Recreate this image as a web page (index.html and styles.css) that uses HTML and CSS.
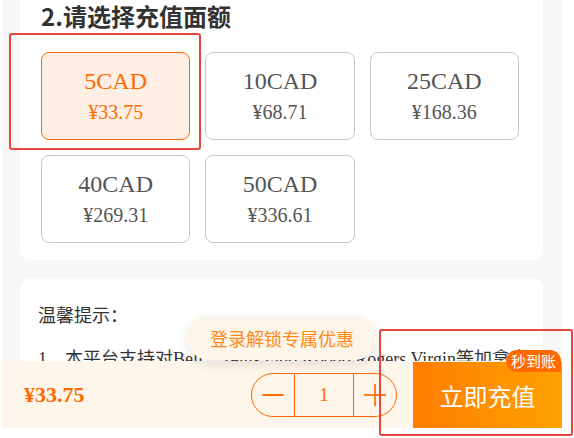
FILE: index.html
```html
<!DOCTYPE html>
<html lang="zh-CN">
<head>
<meta charset="utf-8">
<title>充值</title>
<link rel="stylesheet" href="styles.css">
</head>
<body>
<div class="page">
  <section class="card card-amount">
    <h2 class="title">2.请选择充值面额</h2>
    <div class="options">
      <div class="opt selected"><span class="amt">5CAD</span><span class="price">¥33.75</span></div>
      <div class="opt"><span class="amt">10CAD</span><span class="price">¥68.71</span></div>
      <div class="opt"><span class="amt">25CAD</span><span class="price">¥168.36</span></div>
      <div class="opt"><span class="amt">40CAD</span><span class="price">¥269.31</span></div>
      <div class="opt"><span class="amt">50CAD</span><span class="price">¥336.61</span></div>
    </div>
  </section>
  <section class="card card-tips">
    <h3 class="tips-title">温馨提示：</h3>
    <p class="tips-line">1、本平台支持对Bell、Telus Fido Koodo Rogers Virgin等加拿大运营商进行充值</p>
  </section>
  <div class="login-tip">登录解锁专属优惠</div>
  <div class="bar">
    <span class="total">¥33.75</span>
    <div class="stepper">
      <span class="step"><svg width="22" height="22" viewBox="0 0 22 22"><line x1="0.5" y1="11" x2="21.5" y2="11" stroke="#ff6a00" stroke-width="2"/></svg></span>
      <span class="qty">1</span>
      <span class="step"><svg width="22" height="22" viewBox="0 0 22 22"><line x1="0" y1="11" x2="22" y2="11" stroke="#ff6a00" stroke-width="1.7"/><line x1="11" y1="0" x2="11" y2="22" stroke="#ff6a00" stroke-width="1.7"/></svg></span>
    </div>
    <div class="pay">立即充值<span class="badge">秒到账</span></div>
  </div>
</div>
<div class="mark mark-a"></div>
<div class="mark mark-b"></div>
</body>
</html>
```
FILE: styles.css
```css
html, body {
  margin: 0;
  padding: 0;
  background: #ffffff;
}
body {
  position: relative;
  width: 574px;
  height: 438px;
  overflow: hidden;
}
.page {
  position: relative;
  width: 560px;
  height: 428px;
  margin-left: 2px;
  padding: 0 19px 0 18px;
  box-sizing: border-box;
  background: #f7f7f7;
  overflow: hidden;
}
.card {
  background: #ffffff;
  border-radius: 10px;
}
.card-amount {
  border-radius: 0 0 10px 10px;
  padding: 1px 24px 17px 21px;
}
.title {
  margin: 0 0 21px 0;
  font-family: "Noto Sans CJK SC", sans-serif;
  font-size: 24px;
  line-height: 30px;
  font-weight: 700;
  color: #333333;
}
.options {
  display: grid;
  grid-template-columns: repeat(3, 1fr);
  column-gap: 15px;
  row-gap: 15px;
}
.opt {
  height: 88px;
  box-sizing: border-box;
  border: 1px solid #c8c8c8;
  border-radius: 8px;
  display: flex;
  flex-direction: column;
  align-items: center;
  justify-content: center;
  font-family: "Liberation Serif", "Noto Sans CJK SC", serif;
  color: #555555;
}
.opt.selected {
  border-color: #ff6a00;
  background: #feeee4;
  color: #ff6a00;
}
.amt {
  font-size: 24px;
  line-height: 30px;
  margin-top: 2px;
}
.price {
  font-size: 20px;
  line-height: 32px;
}
.card-tips {
  margin-top: 18px;
  padding: 23px 18px 40px 18px;
}
.tips-title {
  margin: 0 0 19px 0;
  font-family: "Noto Sans CJK SC", sans-serif;
  font-size: 18px;
  line-height: 26px;
  font-weight: 400;
  color: #333333;
}
.tips-line {
  margin: 0;
  font-family: "Liberation Serif", "Noto Sans CJK SC", serif;
  font-size: 18px;
  line-height: 26px;
  color: #333333;
  white-space: nowrap;
  overflow: hidden;
}
.login-tip {
  position: absolute;
  left: 185px;
  top: 316px;
  width: 190px;
  height: 44px;
  border-radius: 22px;
  background: #fdf4ea;
  box-shadow: 0 4px 12px rgba(0, 0, 0, 0.1);
  color: #ff8a1a;
  font-family: "Noto Sans CJK SC", sans-serif;
  font-size: 18px;
  display: flex;
  align-items: center;
  justify-content: center;
  z-index: 3;
}
.bar {
  position: absolute;
  left: 0;
  right: 0;
  bottom: 0;
  height: 67px;
  display: flex;
  align-items: center;
  padding-left: 22px;
  background: #fef5eb;
  z-index: 2;
}
.total {
  font-family: "Liberation Serif", serif;
  font-size: 22px;
  font-weight: 700;
  color: #ff6a00;
}
.stepper {
  margin-left: auto;
  margin-right: 16px;
  width: 146px;
  height: 44px;
  box-sizing: border-box;
  border: 1px solid #ff6a00;
  border-radius: 22px;
  display: grid;
  grid-template-columns: 42px 1fr 42px;
}
.step {
  display: flex;
  align-items: center;
  justify-content: center;
}
.qty {
  border-left: 1px solid #ff6a00;
  border-right: 1px solid #ff6a00;
  display: flex;
  align-items: center;
  justify-content: center;
  font-family: "Liberation Serif", serif;
  font-size: 19px;
  color: #ff6a00;
}
.pay {
  position: relative;
  align-self: flex-end;
  width: 149px;
  height: 66px;
  background: linear-gradient(90deg, #ff7d00, #ffa200);
  color: #ffffff;
  font-family: "Noto Sans CJK SC", sans-serif;
  font-size: 24px;
  display: flex;
  align-items: center;
  justify-content: center;
}
.badge {
  position: absolute;
  top: -12px;
  right: 1px;
  height: 22px;
  padding: 0 5px;
  border-radius: 11px 11px 0 11px;
  background: #ff6a00;
  color: #ffffff;
  font-size: 15px;
  line-height: 22px;
}
.mark {
  position: absolute;
  border: 2px solid #e8463b;
  border-radius: 3px;
  box-sizing: border-box;
  z-index: 10;
}
.mark-a {
  left: 9px;
  top: 33px;
  width: 192px;
  height: 117px;
}
.mark-b {
  left: 379px;
  top: 329px;
  width: 194px;
  height: 107px;
}
```
